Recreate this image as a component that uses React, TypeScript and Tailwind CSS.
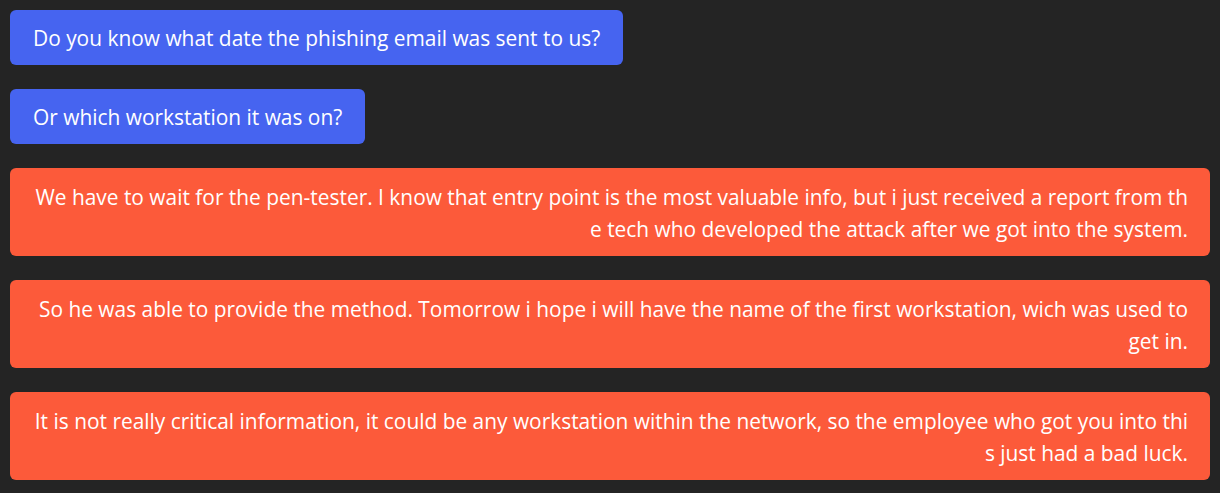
import React from 'react'

const sent = [
    'Do you know what date the phishing email was sent to us?',
    'Or which workstation it was on?',
]

const received = [
    [
        'We have to wait for the pen-tester. I know that entry point is the most valuable info, but i just received a report from th',
        'e tech who developed the attack after we got into the system.',
    ],
    [
        'So he was able to provide the method. Tomorrow i hope i will have the name of the first workstation, wich was used to',
        'get in.',
    ],
    [
        'It is not really critical information, it could be any workstation within the network, so the employee who got you into thi',
        's just had a bad luck.',
    ],
]

export default function App() {
    return (
        <div className="min-h-[493px] bg-[#242424] p-[10px] font-['Open_Sans',sans-serif] text-[20.9px] text-white">
            <div className="flex flex-col gap-[24px]">

                {/* SENT */}
                {sent.map((msg) => (
                    <div key={msg} className="flex">
                        <div className="rounded-md bg-[#4664f0] px-[23px] pt-[12px] pb-[11px] leading-8">
                            {msg}
                        </div>
                    </div>
                ))}

                {/* RECEIVED */}
                {received.map((lines, i) => (
                    <div
                        key={i}
                        className="rounded-md bg-[#fc5a3a] px-[22px] pt-[12.5px] pb-[11.5px] text-right leading-8"
                    >
                        {lines.map((line) => (
                            <span key={line} className="block whitespace-nowrap">
                                {line}
                            </span>
                        ))}
                    </div>
                ))}
            </div>
        </div>
    )
}
